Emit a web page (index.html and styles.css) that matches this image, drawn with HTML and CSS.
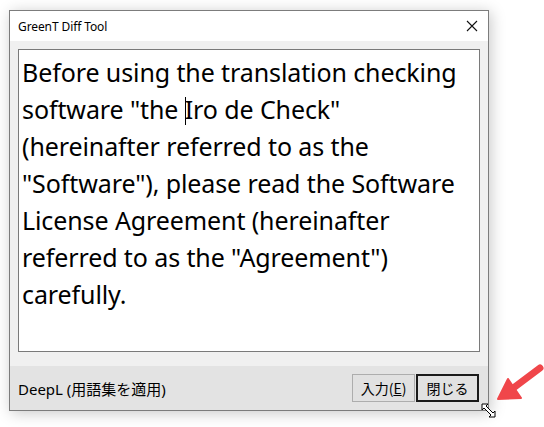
FILE: index.html
```html
<!DOCTYPE html>
<html>
<head>
<meta charset="utf-8">
<link rel="stylesheet" href="styles.css">
</head>
<body>
<div class="window">
  <div class="titlebar">
    <span class="title">GreenT Diff Tool</span>
    <svg class="close" width="12" height="12" viewBox="0 0 12 12"><path d="M1 1 L11 11 M11 1 L1 11" stroke="#111" stroke-width="1.1" fill="none"/></svg>
  </div>
  <div class="content">
    <div class="textbox">Before using the translation checking<br>software "the <span class="caret"></span>Iro de Check"<br>(hereinafter referred to as the<br>"Software"), please read the Software<br>License Agreement (hereinafter<br>referred to as the "Agreement")<br>carefully.</div>
  </div>
  <div class="footer">
    <span class="engine">DeepL (用語集を適用)</span>
    <div class="buttons">
      <button class="btn">入力(<u>E</u>)</button>
      <button class="btn default">閉じる</button>
    </div>
  </div>
  <svg class="grip" width="20" height="20" viewBox="0 0 20 20"><path d="M2 2 L8 2 L6 4 L13 11 L15 9 L15 15 L9 15 L11 13 L4 6 L2 8 Z" fill="#fff" stroke="#000" stroke-width="1" stroke-linejoin="miter"/></svg>
</div>
<svg class="arrow" width="60" height="50" viewBox="0 0 60 50"><path d="M50 6 L22 27" stroke="#f0464a" stroke-width="7" stroke-linecap="round"/><path d="M8 37 L18 17 L31 36 Z" fill="#f0464a" stroke="#f0464a" stroke-width="2" stroke-linejoin="round"/></svg>
</body>
</html>
```
FILE: styles.css
```css
html, body {
  margin: 0;
  padding: 0;
  background: #ffffff;
}
body {
  padding: 10px 0 0 9px;
  position: relative;
  height: 417px;
  overflow: hidden;
}
.window {
  position: relative;
  width: 480px;
  height: 401px;
  box-sizing: border-box;
  border: 1px solid #7c7c7c;
  background: #f0f0f0;
  box-shadow: 2px 2px 14px rgba(0,0,0,0.22);
  display: flex;
  flex-direction: column;
  font-family: "Noto Sans", "Noto Sans CJK JP", sans-serif;
}
.titlebar {
  height: 30px;
  background: #ffffff;
  display: flex;
  align-items: center;
  justify-content: space-between;
  padding: 0 10px 0 8px;
}
.title {
  font-size: 12px;
  color: #000;
  letter-spacing: -0.1px;
}
.close {
  display: block;
}
.content {
  flex: 1;
  padding: 8px 8px 14px 8px;
  display: flex;
}
.textbox {
  flex: 1;
  background: #fff;
  border: 1px solid #7a7a7a;
  font-family: "Noto Sans", sans-serif;
  font-size: 25px;
  line-height: 37px;
  color: #000;
  padding: 4px 3px;
  white-space: nowrap;
  overflow: hidden;
  letter-spacing: -0.1px;
}
.caret {
  display: inline-block;
  width: 1px;
  height: 28px;
  background: #000;
  vertical-align: -6px;
  margin-right: -1px;
}
.footer {
  height: 44px;
  background: #e3e3e3;
  display: flex;
  align-items: center;
  justify-content: space-between;
  padding: 0 9px 0 8px;
}
.engine {
  font-family: "Noto Sans", "Noto Sans CJK JP", sans-serif;
  font-size: 15px;
  color: #000;
}
.buttons {
  display: flex;
  gap: 1px;
  margin-top: -1px;
}
.btn {
  width: 63px;
  height: 28px;
  box-sizing: border-box;
  border: 1px solid #adadad;
  background: #e1e1e1;
  font-family: "Noto Sans CJK JP", sans-serif;
  font-size: 14px;
  color: #000;
  padding: 0;
}
.btn.default {
  border: 2px solid #1a1a1a;
}
.grip {
  position: absolute;
  right: -12px;
  bottom: -12px;
}
.arrow {
  position: absolute;
  left: 490px;
  top: 362px;
}
```
